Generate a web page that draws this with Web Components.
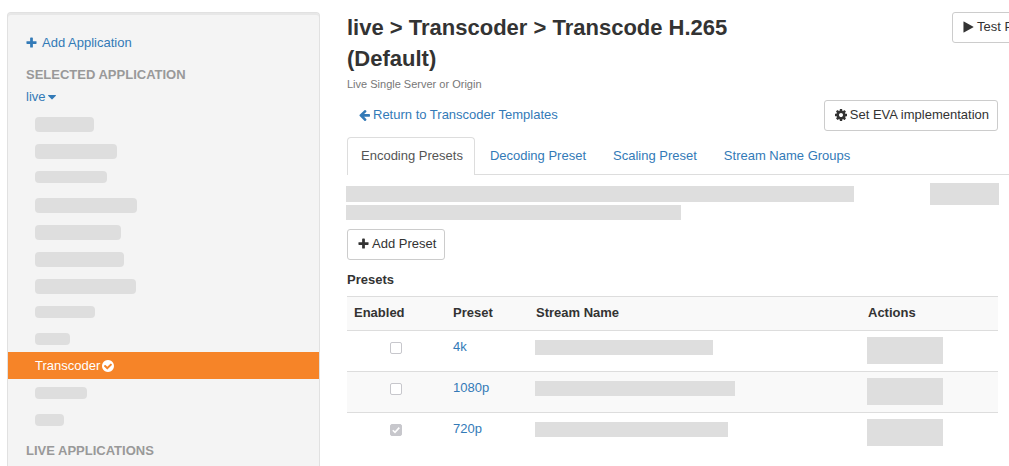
<!DOCTYPE html>
<html lang="en">
<head>
<meta charset="utf-8">
<meta name="viewport" content="width=device-width, initial-scale=1">
<title>Transcoder</title>
<style>
  body { margin: 0; background: #fff; color: #333; font: 13px/19px "Liberation Sans", Arial, sans-serif; }
</style>
</head>
<body>
<app-shell>
  <side-nav slot="side"></side-nav>
  <page-header>
    <span slot="title">live &gt; Transcoder &gt; Transcode H.265 (Default)</span>
    <span slot="subtitle">Live Single Server or Origin</span>
    <tool-button slot="action" icon="play">Test Playback</tool-button>
  </page-header>
  <return-bar></return-bar>
  <tab-strip></tab-strip>
  <encoding-panel></encoding-panel>
</app-shell>

<script>
const ICONS = {
  plus: 'M1600 736v192q0 40-28 68t-68 28h-416v416q0 40-28 68t-68 28h-192q-40 0-68-28t-28-68v-416h-416q-40 0-68-28t-28-68v-192q0-40 28-68t68-28h416v-416q0-40 28-68t68-28h192q40 0 68 28t28 68v416h416q40 0 68 28t28 68z',
  play: 'M1576 927l-1328 738q-23 13-39.5 3t-16.5-36v-1472q0-26 16.5-36t39.5 3l1328 738q23 13 23 31t-23 31z',
  cog: 'M1152 896q0-106-75-181t-181-75-181 75-75 181 75 181 181 75 181-75 75-181zm512-109v222q0 12-8 23t-20 13l-185 28q-19 54-39 91 35 50 107 138 10 12 10 25t-9 23q-27 37-99 108t-94 71q-12 0-26-9l-138-108q-44 23-91 38-16 136-29 186-7 28-36 28h-222q-14 0-24.5-8.5t-11.5-21.5l-28-184q-49-16-90-37l-141 107q-10 9-25 9-14 0-25-11-126-114-165-168-7-10-7-23 0-12 8-23 15-21 51-66.5t54-70.5q-27-50-41-99l-183-27q-13-2-21-12.5t-8-23.5v-222q0-12 8-23t19-13l186-28q14-46 39-92-40-57-107-138-10-12-10-24 0-10 9-23 26-36 98.5-107.5t94.5-71.5q13 0 26 10l138 107q44-23 91-38 16-136 29-186 7-28 36-28h222q14 0 24.5 8.5t11.5 21.5l28 184q49 16 90 37l142-107q9-9 24-9 13 0 25 10 129 119 165 170 7 8 7 22 0 12-8 23-15 21-51 66.5t-54 70.5q26 50 41 98l183 28q13 2 21 12.5t8 23.5z',
  back: 'M1664 896v128q0 53-32.5 90.5t-84.5 37.5h-704l293 294q38 36 38 90t-38 90l-75 76q-37 37-90 37-52 0-91-37l-651-652q-37-37-37-90 0-52 37-91l651-650q38-38 91-38 52 0 90 38l75 74q38 38 38 91t-38 91l-293 293h704q52 0 84.5 37.5t32.5 90.5z',
  check: 'M1412 734q0-28-18-46l-91-90q-19-19-45-19t-45 19l-408 407-226-226q-19-19-45-19t-45 19l-91 90q-18 18-18 46 0 27 18 45l362 362q19 19 45 19 27 0 46-19l543-543q18-18 18-45zm252 162q0 209-103 385.5t-279.5 279.5-385.5 103-385.5-103-279.5-279.5-103-385.5 103-385.5 279.5-279.5 385.5-103 385.5 103 279.5 279.5 103 385.5z',
  caret: 'M1408 704q0 26-19 45l-448 448q-19 19-45 19t-45-19l-448-448q-19-19-19-45t19-45 45-19h896q26 0 45 19t19 45z'
};
const BOXES = { caret: '384 128 1024 1536' };

function define(name, markup) {
  customElements.define(name, class extends HTMLElement {
    constructor() {
      super();
      const root = this.attachShadow({ mode: 'open' });
      root.innerHTML = typeof markup === 'function' ? markup(this) : markup;
    }
  });
}

define('ui-icon', el => {
  const name = el.getAttribute('name');
  return `<style>
    :host { display: inline-block; flex: none; width: 12px; height: 12px; }
    :host([name="plus"]) { width: 11px; }
    :host([name="play"]) { width: 11px; }
    :host([name="back"]) { width: 11px; }
    :host([name="caret"]) { width: 8px; }
    svg { display: block; width: 100%; height: 100%; fill: currentColor; }
  </style>
  <svg viewBox="${BOXES[name] || '128 128 1536 1536'}" aria-hidden="true"><path d="${ICONS[name]}"/></svg>`;
});

define('tool-button', el => `<style>
    :host { display: inline-block; }
    button { display: flex; align-items: center; gap: 3px; margin: 0; padding: 4px 8px 6px 10px; font: inherit;
      color: #333; background: #fff; border: 1px solid #ccc; border-radius: 3px; white-space: nowrap; }
  </style>
  <button type="button"><ui-icon name="${el.getAttribute('icon')}"></ui-icon><slot></slot></button>`);

define('blank-bar', el => `<style>
    :host { display: block; max-width: 100%; width: ${el.getAttribute('w')}px; height: ${el.getAttribute('h')}px;
      background: #dedede; border-radius: var(--bar-radius, 0); }
  </style>`);

define('app-shell', `<style>
    :host { display: grid; grid-template-columns: 313px minmax(0, 1fr); column-gap: 27px; box-sizing: border-box;
      min-height: 100vh; padding: 12px 0 0 7px; overflow: hidden; }
    main { min-width: 0; }
  </style>
  <slot name="side"></slot>
  <main><slot></slot></main>`);

const bars = list => list.map(([w, h]) => `<li><blank-bar w="${w}" h="${h}"></blank-bar></li>`).join('');

define('side-nav', `<style>
    :host { display: block; box-sizing: border-box; padding: 20px 0 6px; background: #f4f4f4;
      border: 1px solid #e1e1e1; border-bottom: 0; border-radius: 4px 4px 0 0; box-shadow: inset 0 2px #e7e7e7; }
    a { color: #337ab7; text-decoration: none; }
    .add, .app { display: flex; align-items: center; margin-left: 18px; }
    .add { gap: 5px; }
    .app { gap: 2px; }
    h2 { margin: 13px 0 3px 18px; font-size: 13px; font-weight: bold; color: #999; }
    ul { list-style: none; margin: 3px 0 8px; padding: 0; --bar-radius: 4px; }
    li { box-sizing: border-box; height: 27px; padding: 8px 27px; }
    li.on { padding: 0; background: #f68428; }
    li.on a { display: flex; align-items: center; gap: 2px; padding: 4px 27px; color: #fff; }
    h2.live { margin: 0 0 0 18px; }
  </style>
  <nav>
    <a class="add" href="#add"><ui-icon name="plus"></ui-icon>Add Application</a>
    <h2>SELECTED APPLICATION</h2>
    <a class="app" href="#live">live<ui-icon name="caret"></ui-icon></a>
    <ul>
      ${bars([[59, 15], [82, 15], [72, 12], [102, 15], [86, 15], [89, 15], [101, 15], [60, 12], [35, 12]])}
      <li class="on"><a href="#transcoder">Transcoder<ui-icon name="check"></ui-icon></a></li>
      ${bars([[52, 12], [29, 12]])}
    </ul>
    <h2 class="live">LIVE APPLICATIONS</h2>
  </nav>`);

define('page-header', `<style>
    :host { display: flex; }
    div { flex: 1; min-width: 0; padding-right: 150px; }
    h1 { margin: 0 0 3px; font-size: 22px; line-height: 31px; font-weight: bold; }
    p { margin: 0; font-size: 11px; line-height: 15px; color: #777; }
    aside { flex: 0 0 57px; min-width: 0; }
  </style>
  <div><h1><slot name="title"></slot></h1><p><slot name="subtitle"></slot></p></div>
  <aside><slot name="action"></slot></aside>`);

define('return-bar', `<style>
    :host { display: flex; justify-content: space-between; margin: 8px 11px 6px 12px; }
    a { display: flex; align-items: center; align-self: flex-start; gap: 3px; padding-top: 5px; color: #337ab7; text-decoration: none; }
  </style>
  <a href="#templates"><ui-icon name="back"></ui-icon>Return to Transcoder Templates</a>
  <tool-button icon="cog">Set EVA implementation</tool-button>`);

define('tab-strip', `<style>
    :host { display: block; }
    nav { display: flex; gap: 1px; border-bottom: 1px solid #ddd; }
    a { padding: 8px 11px 9px 13px; border: 1px solid transparent; border-bottom: 0; color: #337ab7; text-decoration: none; white-space: nowrap; }
    a.on { margin-bottom: -1px; padding-bottom: 10px; color: #555; background: #fff; border-color: #ddd; border-radius: 4px 4px 0 0; }
  </style>
  <nav>
    <a class="on" href="#encoding" aria-current="page">Encoding Presets</a>
    <a href="#decoding">Decoding Preset</a>
    <a href="#scaling">Scaling Preset</a>
    <a href="#groups">Stream Name Groups</a>
  </nav>`);

define('encoding-panel', `<style>
    :host { display: block; margin: 8px 11px 0 0; }
    .intro { display: flex; justify-content: space-between; margin: 0 -1px 9px; }
    .lines { display: grid; gap: 3px; padding-top: 3px; }
    tool-button { display: block; width: max-content; }
    h3 { margin: 10px 0 7px; font-size: 13px; font-weight: bold; }
  </style>
  <div class="intro">
    <div class="lines"><blank-bar w="508" h="16"></blank-bar><blank-bar w="335" h="15"></blank-bar></div>
    <blank-bar w="69" h="22"></blank-bar>
  </div>
  <tool-button icon="plus">Add Preset</tool-button>
  <h3>Presets</h3>
  <preset-table></preset-table>`);

const row = ([name, width, on]) => `<tr>
    <td class="tick"><input type="checkbox" disabled ${on ? 'checked' : ''} aria-label="${name} enabled"></td>
    <td><a href="#${name}">${name}</a></td>
    <td><blank-bar class="stream" w="${width}" h="15"></blank-bar></td>
    <td><blank-bar class="act" w="76" h="27"></blank-bar></td>
  </tr>`;

define('preset-table', `<style>
    :host { display: block; }
    table { width: 100%; table-layout: fixed; border-collapse: separate; border-spacing: 0; }
    th, td { padding: 6px 7px; text-align: left; vertical-align: top; border-top: 1px solid #ddd; }
    th { padding-bottom: 8px; }
    td { height: 28px; line-height: 19px; }
    thead tr, tbody tr:nth-child(even) { background: #f9f9f9; }
    .c1 { width: 99px; } .c2 { width: 83px; } .c4 { width: 137px; }
    a { color: #337ab7; text-decoration: none; }
    .tick { padding-right: 8px; }
    input { appearance: none; display: block; box-sizing: border-box; width: 12px; height: 12px; margin: 5px auto 0;
      border: 1px solid #c7c7cc; border-radius: 2px; background: #fff; }
    input:checked { background: #c7c7cc url('data:image/svg+xml,<svg xmlns="http://www.w3.org/2000/svg" viewBox="0 0 10 10"><path d="M1.8 5.2 4 7.4 8.3 2.6" fill="none" stroke="white" stroke-width="1.6"/></svg>') center/10px 10px no-repeat; }
    .stream { margin: 3px 0 0 -1px; }
    .act { margin-left: -1px; }
  </style>
  <table>
    <colgroup><col class="c1"><col class="c2"><col><col class="c4"></colgroup>
    <thead><tr><th scope="col">Enabled</th><th scope="col">Preset</th><th scope="col">Stream Name</th><th scope="col">Actions</th></tr></thead>
    <tbody>${[['4k', 178], ['1080p', 200], ['720p', 193, true]].map(row).join('')}</tbody>
  </table>`);
</script>
</body>
</html>
